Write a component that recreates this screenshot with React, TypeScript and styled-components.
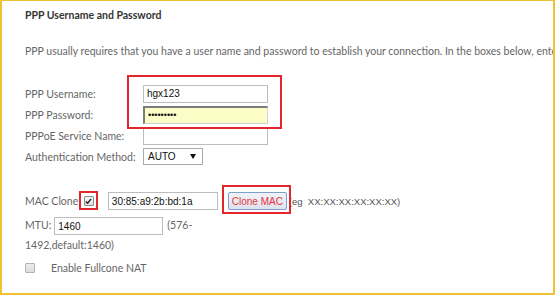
import React from 'react'
import styled, { createGlobalStyle, css } from 'styled-components'

const GlobalStyle = createGlobalStyle`
  body {
    margin: 0;
    background: #fff;
  }
`

const Frame = styled.div`
  box-sizing: border-box;
  width: 555px;
  height: 295px;
  border: 2px solid #f1c232;
  border-top-width: 1px;
  overflow: hidden;
  padding: 6px 0 0 23px;
  font-family: Lato, 'Open Sans', sans-serif;
  font-size: 10.5px;
  color: #666;
`

const Title = styled.h3`
  margin: 0;
  font-size: 10.5px;
  line-height: 16px;
  font-weight: bold;
  color: #333;
`

const Intro = styled.p`
  margin: 20px 0 0;
  line-height: 16px;
  white-space: nowrap;
`

// red annotation box drawn over a part of the form
const Marked = styled.div<{ $inset: string; $inline?: boolean }>`
  position: relative;
  ${p =>
    p.$inline &&
    css`
      display: inline-flex;
    `}
  &::after {
    content: '';
    position: absolute;
    inset: ${p => p.$inset};
    border: 2px solid #e3262b;
    pointer-events: none;
  }
`

const Group = styled(Marked)`
  width: fit-content;
  margin-top: 24px;
`

const Row = styled.div<{ $height?: number }>`
  display: flex;
  align-items: center;
  height: ${p => p.$height ?? 21}px;
`

const Label = styled.span<{ $width?: number }>`
  flex: none;
  width: ${p => (p.$width ? `${p.$width}px` : 'auto')};
  white-space: nowrap;
`

const TextInput = styled.input<{ $width?: number; $filled?: boolean }>`
  box-sizing: border-box;
  width: ${p => p.$width ?? 125}px;
  height: 18px;
  margin: 0;
  padding: 0 3px;
  border: 1px solid #bdbdbd;
  background: #fff;
  font-family: 'Liberation Sans', Arial, sans-serif;
  font-size: 10px;
  color: #111;
  outline: none;
  ${p =>
    p.$filled &&
    css`
      background: #fcfcc6;
      border-style: solid;
      border-width: 2px 1px 1px 2px;
      border-color: #7c7c7c #d2d2d2 #d2d2d2 #7c7c7c;
      font-size: 9px;
    `}
`

const Select = styled.select`
  appearance: none;
  box-sizing: border-box;
  width: 60px;
  height: 17px;
  margin: 0;
  padding: 0 0 0 4px;
  border: 1px solid #a9a9a9;
  border-radius: 0;
  background: #fff
    url("data:image/svg+xml;utf8,<svg xmlns='http://www.w3.org/2000/svg' width='6' height='5'><path d='M0 0h6L3 5z' fill='%23111'/></svg>")
    no-repeat right 6px center;
  font-family: 'Liberation Sans', Arial, sans-serif;
  font-size: 10px;
  color: #111;
`

const Check = styled.input.attrs({ type: 'checkbox' })<{ $dim?: boolean }>`
  appearance: none;
  flex: none;
  box-sizing: border-box;
  width: 10px;
  height: 10px;
  margin: 0;
  border: 1px solid ${p => (p.$dim ? '#b4b4b4' : '#8c8c8c')};
  border-radius: 1px;
  background: ${p => (p.$dim ? 'linear-gradient(#ececec, #dcdcdc)' : 'linear-gradient(#f6f6f6, #dedede)')};
  &:checked {
    background:
      url("data:image/svg+xml;utf8,<svg xmlns='http://www.w3.org/2000/svg' width='8' height='8'><path d='M1 4l2 2 4-5' stroke='%23222' stroke-width='1.6' fill='none'/></svg>")
        center / 7px no-repeat,
      linear-gradient(#f6f6f6, #dedede);
  }
`

const MacRow = styled(Row)`
  height: 20px;
  margin-top: 24px;
`

const CloneButton = styled.button`
  box-sizing: border-box;
  width: 59px;
  height: 18px;
  padding: 0;
  border: 1px solid #7f9fcf;
  border-radius: 2px;
  background: linear-gradient(#f0f3f8, #dce3ee);
  color: #e8333c;
  font-family: 'Liberation Sans', Arial, sans-serif;
  font-size: 10px;
`

const Hint = styled.span`
  margin-left: 2px;
  font-family: 'Liberation Sans', Arial, sans-serif;
  font-size: 9.5px;
  color: #555;
  white-space: pre;
`

const MtuBlock = styled.div`
  width: 190px;
  margin-top: 4px;
  line-height: 20px;
`

const MtuInput = styled(TextInput)`
  margin: 0 4px 0 3px;
  vertical-align: middle;
`

const NatRow = styled(Row)`
  height: 18px;
  margin-top: 4px;
  gap: 16px;
`

export default function App() {
  return (
    <>
      <GlobalStyle />
      <Frame>
        <Title>PPP Username and Password</Title>
        <Intro>
          PPP usually requires that you have a user name and password to establish your connection. In the boxes below, enter the user name and password provided to you by your ISP.
        </Intro>

        <Group $inset="-8px -14px -4px 102px">
          <Row>
            <Label $width={118}>PPP Username:</Label>
            <TextInput defaultValue="hgx123" />
          </Row>
          <Row>
            <Label $width={118}>PPP Password:</Label>
            <TextInput type="password" defaultValue="hgx123456" $filled />
          </Row>
        </Group>
        <Row>
          <Label $width={118}>PPPoE Service Name:</Label>
          <TextInput defaultValue="" />
        </Row>
        <Row>
          <Label $width={118}>Authentication Method:</Label>
          <Select defaultValue="AUTO">
            <option>AUTO</option>
            <option>PAP</option>
            <option>CHAP</option>
          </Select>
        </Row>

        <MacRow>
          <Label style={{ marginRight: 3 }}>MAC Clone:</Label>
          <Marked $inline $inset="-5px -4px -4px -5px">
            <Check defaultChecked />
          </Marked>
          <TextInput $width={110} style={{ marginLeft: 14 }} defaultValue="30:85:a9:2b:bd:1a" />
          <Marked $inline $inset="-7px -4px -4px -6px" style={{ marginLeft: 10 }}>
            <CloneButton>Clone MAC</CloneButton>
          </Marked>
          <Hint>(eg  XX:XX:XX:XX:XX:XX)</Hint>
        </MacRow>

        <MtuBlock>
          MTU:
          <MtuInput $width={109} defaultValue="1460" />
          (576-<wbr />1492,default:1460)
        </MtuBlock>

        <NatRow>
          <Check $dim />
          <span>Enable Fullcone NAT</span>
        </NatRow>
      </Frame>
    </>
  )
}
